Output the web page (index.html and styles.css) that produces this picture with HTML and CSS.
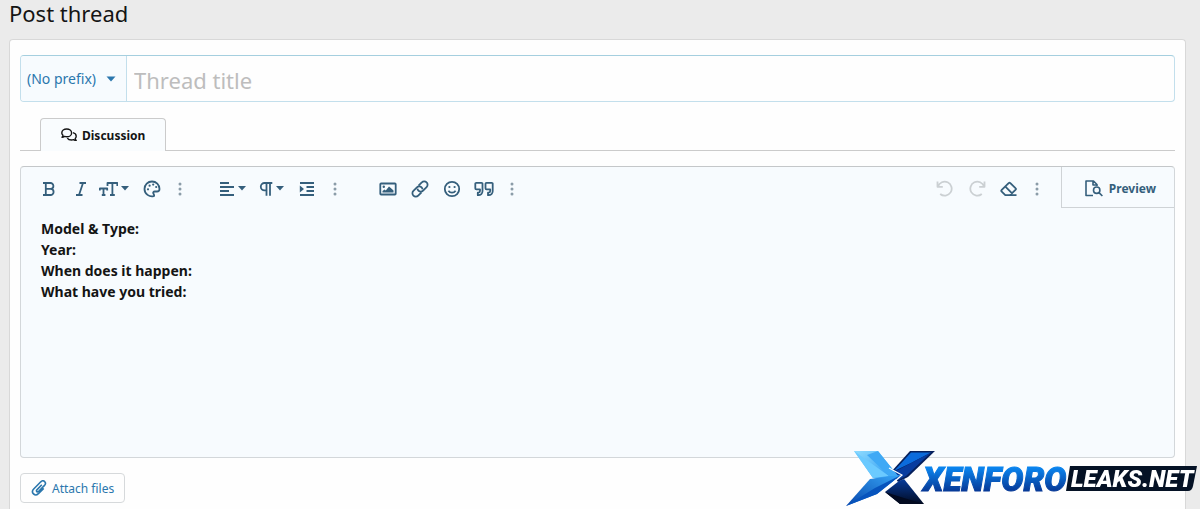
FILE: index.html
```html
<!DOCTYPE html>
<html lang="en">
<head>
    <meta charset="UTF-8">
    <meta name="viewport" content="width=device-width, initial-scale=1.0">
    <title>Post thread</title>
    <link rel="stylesheet" href="styles.css">
</head>
<body>

    <h1>Post thread</h1>

    <form class="block">
        <div class="title-row">
            <div class="prefix">
                <select class="prefix-select" aria-label="Prefix">
                    <option>(No prefix)</option>
                </select>
                <svg class="prefix-caret" width="10" height="6" viewBox="0 0 10 6"><path d="M0.5 0.5h9L5 5.5z"/></svg>
            </div>
            <input type="text" class="title-input" placeholder="Thread title" aria-label="Thread title">
        </div>

        <div class="tabs" role="tablist">
            <button type="button" class="tab" role="tab" aria-selected="true">
                <svg class="icon" width="16" height="14" viewBox="0 0 16 14">
                    <path d="M1 9.200c.9-.9 1-1.500 1-1.900C1.200 6.600.8 5.800.8 4.900.8 2.600 3 1 5.700 1s4.900 1.600 4.900 3.900-2.200 3.900-4.900 3.900c-.7 0-1.400-.1-2-.4-.7.4-1.600.8-2.700.8z"/>
                    <path d="M11.900 4.600c1.900.5 3.300 1.900 3.300 3.600 0 .9-.4 1.700-1 2.300.1.600.4 1.200 1 1.900-1.200 0-2-.4-2.700-.8-.6.200-1.300.4-2 .4-1.800 0-3.400-.7-4.200-1.900"/>
                </svg>
                Discussion
            </button>
        </div>

        <div class="editor">
            <div class="toolbar">
                <div class="group">
                    <button type="button" class="tool" aria-label="Bold">
                        <svg class="icon" width="14" height="16" viewBox="0 0 14 16"><path d="M1 2h7.500a2.900 2.900 0 0 1 0 5.800H4M8.500 7.800a3.100 3.100 0 0 1 0 6.200H1M3.800 2v12"/></svg>
                    </button>
                    <button type="button" class="tool" aria-label="Italic">
                        <svg class="icon" width="12" height="16" viewBox="0 0 12 16"><path d="M4.500 2H11M1 14h6.500M8 2L4 14"/></svg>
                    </button>
                    <button type="button" class="tool drop" aria-label="Font size">
                        <svg class="icon" width="19" height="16" viewBox="0 0 19 16"><path d="M8.500 5V2H18.300v3M13.400 2v12M11 14h4.800M.8 9.500V7.500h7.400v2M4.500 7.500V14M2.800 14h3.600"/></svg>
                        <svg class="caret" width="8" height="5" viewBox="0 0 8 5"><path d="M0 0h8L4 4.500z"/></svg>
                    </button>
                    <button type="button" class="tool" aria-label="Text color">
                        <svg class="icon" width="18" height="18" viewBox="0 0 18 18"><path d="M10.700 16.200C6.500 17.300 1.500 14 1.500 9a7.500 7.500 0 0 1 15 0c0 1.600-1 2.500-2.500 2.500h-2.200c-1.400 0-2 1.200-1.300 2.200.6 1 .9 2.100.2 2.500z"/><g class="solid"><circle cx="5" cy="9.300" r="1.100"/><circle cx="6.600" cy="5.700" r="1.100"/><circle cx="10.200" cy="4.600" r="1.100"/><circle cx="13.200" cy="7" r="1.100"/></g></svg>
                    </button>
                    <button type="button" class="tool more" aria-label="More text options">
                        <svg width="4" height="14" viewBox="0 0 4 14"><circle cx="2" cy="2" r="1.500"/><circle cx="2" cy="7" r="1.500"/><circle cx="2" cy="12" r="1.500"/></svg>
                    </button>
                </div>

                <div class="group">
                    <button type="button" class="tool drop" aria-label="Alignment">
                        <svg class="icon" width="16" height="16" viewBox="0 0 16 16"><path d="M1 2h9M1 6h14M1 10h9M1 14h14"/></svg>
                        <svg class="caret" width="8" height="5" viewBox="0 0 8 5"><path d="M0 0h8L4 4.500z"/></svg>
                    </button>
                    <button type="button" class="tool drop" aria-label="Paragraph format">
                        <svg class="icon" width="18" height="16" viewBox="0 0 18 16"><path d="M17.300 2H9.500a3.700 3.700 0 0 0 0 7.400h2M11.500 2v12.800M15 2v12.800"/></svg>
                        <svg class="caret" width="8" height="5" viewBox="0 0 8 5"><path d="M0 0h8L4 4.500z"/></svg>
                    </button>
                    <button type="button" class="tool" aria-label="Indent">
                        <svg class="icon" width="16" height="16" viewBox="0 0 16 16"><path d="M1 2h14M7.500 6H15M7.500 10H15M1 14h14"/><path class="solid" d="M.8 4.500v7L5 8z"/></svg>
                    </button>
                    <button type="button" class="tool more" aria-label="More paragraph options">
                        <svg width="4" height="14" viewBox="0 0 4 14"><circle cx="2" cy="2" r="1.500"/><circle cx="2" cy="7" r="1.500"/><circle cx="2" cy="12" r="1.500"/></svg>
                    </button>
                </div>

                <div class="group">
                    <button type="button" class="tool" aria-label="Insert image">
                        <svg class="icon" width="18" height="14" viewBox="0 0 18 14"><rect x="1.300" y="1.500" width="15.400" height="11" rx=".8"/><g class="solid"><circle cx="4.800" cy="4.800" r="1.200"/><path d="M3.500 10.500V9l2-1.500 1.300 1 3.200-4 1.500 1.300 3 2.700v2z"/></g></svg>
                    </button>
                    <button type="button" class="tool" aria-label="Insert link">
                        <svg class="icon" width="18" height="18" viewBox="0 0 18 18"><path d="M10.500 12.300l-3.300 3.300a3.300 3.300 0 0 1-4.800 0 3.300 3.300 0 0 1 0-4.700l3.500-3.500a3.300 3.300 0 0 1 4.700 0c.6.600.9 1.300 1 2"/><path d="M7.500 5.700l3.300-3.300a3.300 3.300 0 0 1 4.800 0 3.300 3.300 0 0 1 0 4.700l-3.500 3.500a3.300 3.300 0 0 1-4.700 0c-.6-.6-.9-1.300-1-2"/></svg>
                    </button>
                    <button type="button" class="tool" aria-label="Smilies">
                        <svg class="icon" width="18" height="18" viewBox="0 0 18 18"><circle cx="9" cy="9" r="7.200"/><path d="M5.400 10.800c1.800 2.500 5.400 2.500 7.200 0"/><g class="solid"><circle cx="6.400" cy="7" r="1.100"/><circle cx="11.600" cy="7" r="1.100"/></g></svg>
                    </button>
                    <button type="button" class="tool" aria-label="Quote">
                        <svg class="icon" width="20" height="16" viewBox="0 0 20 16"><path d="M8.500 2.500v7.800a4 4 0 0 1-4 3.900h-.7v-2.500h.7a1.600 1.600 0 0 0 1.500-1.600V8.300H2.300a1 1 0 0 1-1-1V2.800a1 1 0 0 1 1-1h5.200a1 1 0 0 1 1 1zM18.700 2.500v7.800a4 4 0 0 1-4 3.900H14v-2.500h.7a1.600 1.600 0 0 0 1.500-1.600V8.300h-3.700a1 1 0 0 1-1-1V2.800a1 1 0 0 1 1-1h5.200a1 1 0 0 1 1 1z"/></svg>
                    </button>
                    <button type="button" class="tool more" aria-label="More insert options">
                        <svg width="4" height="14" viewBox="0 0 4 14"><circle cx="2" cy="2" r="1.500"/><circle cx="2" cy="7" r="1.500"/><circle cx="2" cy="12" r="1.500"/></svg>
                    </button>
                </div>

                <div class="group group-right">
                    <button type="button" class="tool" aria-label="Undo" disabled>
                        <svg class="icon" width="18" height="18" viewBox="0 0 18 18"><path d="M1.500 1.500v5.300h5.300M2 6.500A7 7 0 1 1 4.200 14"/></svg>
                    </button>
                    <button type="button" class="tool" aria-label="Redo" disabled>
                        <svg class="icon" width="18" height="18" viewBox="0 0 18 18"><path d="M16.500 1.500v5.300h-5.300M16 6.500A7 7 0 1 0 13.800 14"/></svg>
                    </button>
                    <button type="button" class="tool" aria-label="Remove formatting">
                        <svg class="icon" width="18" height="16" viewBox="0 0 18 16"><path d="M16.500 14.200H5.300L1.500 10.400a.8.800 0 0 1 0-1.200l7.400-7.400a.8.800 0 0 1 1.200 0l5.600 5.600a.8.800 0 0 1 0 1.200l-5.700 5.600M5.400 5.600l6.700 6.700"/></svg>
                    </button>
                    <button type="button" class="tool more" aria-label="More options">
                        <svg width="4" height="14" viewBox="0 0 4 14"><circle cx="2" cy="2" r="1.500"/><circle cx="2" cy="7" r="1.500"/><circle cx="2" cy="12" r="1.500"/></svg>
                    </button>
                </div>

                <button type="button" class="preview">
                    <svg class="icon" width="18" height="17" viewBox="0 0 18 17"><path d="M8 15.500H1V1h7.500L12 4.500V6M8 1v4h4"/><circle cx="11.700" cy="10.200" r="3.200"/><path d="M14 12.600l3.400 3.400"/></svg>
                    Preview
                </button>
            </div>
            <textarea class="message" aria-label="Message" spellcheck="false">Model &amp; Type:
Year:
When does it happen:
What have you tried:</textarea>
        </div>

        <button type="button" class="attach">
            <svg class="icon" width="16" height="16" viewBox="0 0 16 16"><path d="M10.800 4.800L5.900 9.900c-1.100 1.200.4 2.700 1.600 1.600l6-6.100c2.600-2.700-1-6.200-3.700-3.600L2.700 9c-3.300 3.500 1.200 8 4.700 4.700l5.300-5.300"/></svg>
            Attach files
        </button>
    </form>

    <svg class="logo" width="354" height="58" viewBox="0 0 354 58" role="img" aria-label="XenForoLeaks.net">
        <defs>
            <linearGradient id="wordBlue" x1="0" y1="0" x2="0" y2="1">
                <stop offset="0.200" stop-color="#0a84ee"/>
                <stop offset="0.850" stop-color="#06328f"/>
            </linearGradient>
            <linearGradient id="lightBlue" x1="0" y1="0" x2="1" y2="1">
                <stop offset="0" stop-color="#8fdcff"/>
                <stop offset="1" stop-color="#1d8fee"/>
            </linearGradient>
            <linearGradient id="midBlue" x1="1" y1="0" x2="0" y2="1">
                <stop offset="0" stop-color="#38a8f8"/>
                <stop offset="1" stop-color="#0645ab"/>
            </linearGradient>
            <linearGradient id="darkBlue" x1="0" y1="0" x2="0" y2="1">
                <stop offset="0" stop-color="#073c9c"/>
                <stop offset="1" stop-color="#020b22"/>
            </linearGradient>
        </defs>
        <path fill="#06205c" d="M65 1h25L63 27 53 32 46 22z"/>
        <path fill="#0b6bdc" d="M66 2.500h20L66 13 49 21z"/>
        <path fill="#083c9f" d="M86 2.500L61 26l-8 4-4-8 17-9z"/>
        <path fill="url(#darkBlue)" d="M59 29l20 25H55L40 42l14-11z"/>
        <path fill="#020a20" d="M59 48l20 6H55L40 42z"/>
        <path fill="url(#lightBlue)" d="M9 1h24l20 25-10 6-15-4z"/>
        <path fill="#6bcaff" d="M9 1l19 27 16-2z"/>
        <path fill="#3fa9f5" d="M33 1l20 25-9 0L22 5z"/>
        <path fill="url(#midBlue)" d="M25 29l31-4L32 44 1 56z"/>
        <path fill="#0754bd" d="M56 25L32 44 1 56l29-18z"/>
        <path fill="none" stroke="#fff" stroke-width="1.200" d="M44 18l13 7-23 20-14 6"/>
        <text class="logo-word" x="78" y="41">XENFORO</text>
        <path fill="#051225" d="M225 16h127l-4 20q-1 5-5 5H221z"/>
        <text class="logo-tail" x="226" y="37">LEAKS.NET</text>
    </svg>

</body>
</html>
```

FILE: styles.css
```css
* {
    box-sizing: border-box;
}

body {
    font-family: "Noto Sans", "Open Sans", sans-serif;
    font-size: 14px;
    background-color: #ebebeb;
    color: #141414;
    margin: 0;
    padding: 0 14px 0 9px;
    display: flex;
    flex-direction: column;
    min-height: 100vh;
}

h1 {
    margin: 0 0 12px;
    font-size: 22px;
    font-weight: 400;
    line-height: 27px;
}

button,
input,
select,
textarea {
    font-family: inherit;
    margin: 0;
}

button {
    cursor: pointer;
}

.block {
    flex: 1;
    background-color: #fefefe;
    border: 1px solid #d8d8d8;
    border-bottom: none;
    border-radius: 4px 4px 0 0;
    padding: 15px 10px 6px;
}

.icon {
    flex: none;
    fill: none;
    stroke: currentColor;
    stroke-width: 1.8;
    stroke-linejoin: round;
}

.solid {
    fill: currentColor;
    stroke: none;
}

/* title */
.title-row {
    display: flex;
    height: 47px;
    border: 1px solid #c3dfec;
    border-top-color: #a5cfdf;
    border-radius: 4px;
    overflow: hidden;
}

.prefix {
    position: relative;
    display: flex;
    border-right: 1px solid #c3dfec;
}

.prefix-select {
    appearance: none;
    border: none;
    background-color: #f7fbfe;
    color: #2b77ad;
    font-size: 14px;
    padding: 0 30px 0 6px;
}

.prefix-caret {
    position: absolute;
    right: 10px;
    top: 20px;
    fill: #2b77ad;
    pointer-events: none;
}

.title-input {
    flex: 1;
    min-width: 0;
    border: none;
    background: transparent;
    font-size: 22px;
    padding: 3px 7px 0;
}

.title-input::placeholder {
    color: #bdbdbd;
}

/* tabs */
.tabs {
    display: flex;
    margin: 16px 0 15px;
    padding-left: 20px;
    border-bottom: 1px solid #cbcbcb;
}

.tab {
    display: flex;
    align-items: center;
    gap: 5px;
    height: 33px;
    margin-bottom: -1px;
    padding: 0 20px;
    border: 1px solid #cbcbcb;
    border-bottom: none;
    border-radius: 4px 4px 0 0;
    background-color: #f9fcfe;
    color: #141414;
    font-size: 12px;
    font-weight: 700;
}

.tab .icon {
    stroke-width: 1.4;
}

/* editor */
.editor {
    border: 1px solid #d3d7da;
    border-top-color: #c4c7c9;
    border-radius: 4px;
    background-color: #f7fbfe;
    overflow: hidden;
}

.toolbar {
    display: flex;
    align-items: flex-start;
    gap: 25px;
    padding-left: 12px;
}

.group {
    display: flex;
}

.group-right {
    margin-left: auto;
    margin-right: -13px;
}

.tool {
    display: flex;
    align-items: center;
    justify-content: center;
    width: 32px;
    height: 43px;
    padding: 0;
    border: none;
    background: transparent;
    color: #355f7c;
}

.tool:disabled {
    color: #cbd0d3;
    cursor: default;
}

.drop {
    width: auto;
    gap: 3px;
    padding: 0 7px 0 2px;
}

.caret {
    fill: currentColor;
}

.more {
    width: 24px;
    fill: #8b9ca8;
}

.preview {
    display: flex;
    align-items: center;
    gap: 6px;
    height: 41px;
    padding: 3px 18px 0 23px;
    border: 1px solid #cfd3d6;
    border-width: 0 0 1px 1px;
    background: transparent;
    color: #355f7c;
    font-size: 12px;
    font-weight: 700;
}

.preview .icon {
    stroke-width: 1.6;
}

.message {
    display: block;
    width: 100%;
    height: 247px;
    padding: 8px 20px;
    border: none;
    background: transparent;
    color: #141414;
    font-size: 14px;
    font-weight: 700;
    line-height: 21px;
    resize: none;
}

.message:focus {
    outline: none;
}

/* attachments */
.attach {
    display: flex;
    align-items: center;
    gap: 5px;
    height: 30px;
    margin-top: 15px;
    padding: 0 10px;
    border: 1px solid #d6d9db;
    border-radius: 4px;
    background-color: #fefefe;
    color: #2b77ad;
    font-size: 12px;
}

.attach .icon {
    stroke-width: 1.6;
}

/* logo over the page corner */
.logo {
    position: fixed;
    right: 1px;
    bottom: 1px;
    pointer-events: none;
}

.logo-word,
.logo-tail {
    font-family: Roboto, "Liberation Sans", sans-serif;
    font-style: italic;
    font-weight: 900;
}

.logo-word {
    font-size: 33px;
    fill: url(#wordBlue);
    stroke: url(#wordBlue);
    stroke-width: 1;
}

.logo-tail {
    font-size: 24px;
    fill: #fff;
}
```
